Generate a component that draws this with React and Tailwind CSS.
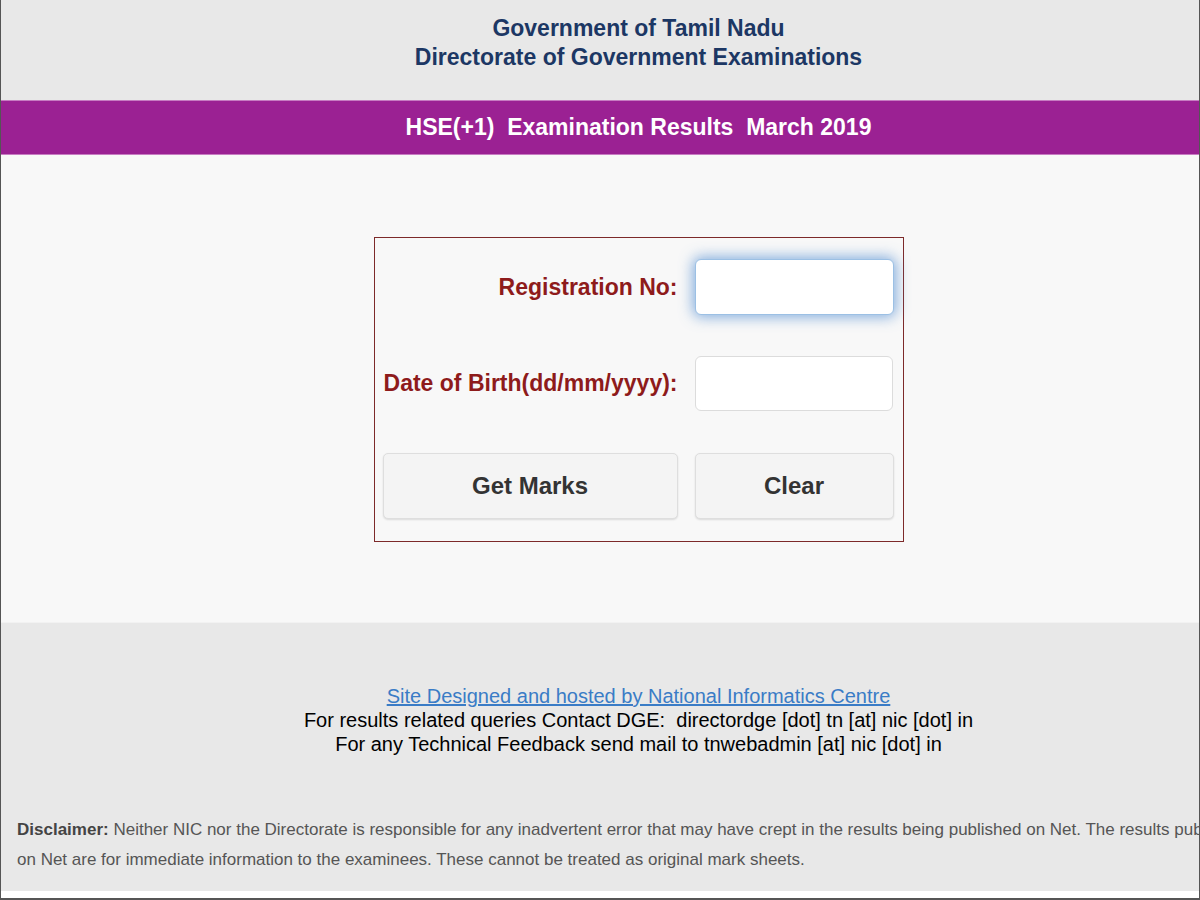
const App = () => {
  return (
    <div className="h-[900px] w-[1200px] overflow-hidden bg-white border-l border-r border-b-2 border-[#555] font-['Liberation_Sans',Arial,sans-serif]">
      {/* page is wider than the visible window, centred at ~638px */}
      <div className="w-[1275px] flex flex-col">
        {/* Header */}
        <header className="h-[100px] shrink-0 bg-[#e8e8e8] pt-[14px] text-center text-[23px] font-bold leading-[29px] text-[#1c3764]">
          <div>Government of Tamil Nadu</div>
          <div>Directorate of Government Examinations</div>
        </header>

        {/* Title bar */}
        <div className="h-[55px] shrink-0 bg-[#9b2193] border-t border-b border-[#c77cc2] flex items-center justify-center">
          <h1 className="text-[23px] font-bold text-white whitespace-pre">HSE(+1)  Examination Results  March 2019</h1>
        </div>

        {/* Form area */}
        <main className="h-[467px] shrink-0 bg-[#f8f8f8] pt-[82px]">
          <div className="mx-auto w-[530px] h-[305px] border border-[#7d2a2a] px-[8px] pt-[21px] flex flex-col">
            <div className="flex items-center gap-[17px] h-[56px]">
              <label className="w-[295px] text-right text-[23px] font-bold text-[#8e1b1b]">Registration No:</label>
              <input
                type="text"
                className="w-[199px] h-[56px] rounded-[6px] bg-white border border-[#9cc0e4] shadow-[0_0_14px_2px_rgba(80,140,210,0.7)] outline-none px-3 text-[18px]"
              />
            </div>
            <div className="flex items-center gap-[17px] h-[55px] mt-[41px]">
              <label className="w-[295px] text-right text-[23px] font-bold text-[#8e1b1b] whitespace-nowrap">Date of Birth(dd/mm/yyyy):</label>
              <input
                type="text"
                className="w-[198px] h-[55px] rounded-[6px] bg-white border border-[#dcdcdc] outline-none px-3 text-[18px]"
              />
            </div>
            <div className="flex gap-[17px] mt-[42px]">
              <button className="w-[295px] h-[66px] rounded-[5px] bg-[#f4f4f4] border border-[#dedede] shadow-[0_1px_2px_rgba(0,0,0,0.12)] text-[24px] font-bold text-[#333]">
                Get Marks
              </button>
              <button className="w-[199px] h-[66px] rounded-[5px] bg-[#f4f4f4] border border-[#dedede] shadow-[0_1px_2px_rgba(0,0,0,0.12)] text-[24px] font-bold text-[#333]">
                Clear
              </button>
            </div>
          </div>
        </main>

        {/* Footer */}
        <footer className="h-[269px] shrink-0 bg-[#e8e8e8] border-t border-[#f2f2f2] pt-[61px]">
          <div className="text-center text-[20px] leading-[24px] text-black">
            <a href="#" className="text-[#3a7cc6] underline">Site Designed and hosted by National Informatics Centre</a>
            <div className="whitespace-pre">For results related queries Contact DGE:  directordge [dot] tn [at] nic [dot] in</div>
            <div>For any Technical Feedback send mail to tnwebadmin [at] nic [dot] in</div>
          </div>
          <div className="mt-[59px] pl-[16px] text-[17px] leading-[30px] text-[#555] whitespace-nowrap">
            <div>
              <span className="font-bold text-[#444]">Disclaimer:</span> Neither NIC nor the Directorate is responsible for any inadvertent error that may have crept in the results being published on Net. The results published
            </div>
            <div>on Net are for immediate information to the examinees. These cannot be treated as original mark sheets.</div>
          </div>
        </footer>
      </div>
    </div>
  );
};

export default App;
